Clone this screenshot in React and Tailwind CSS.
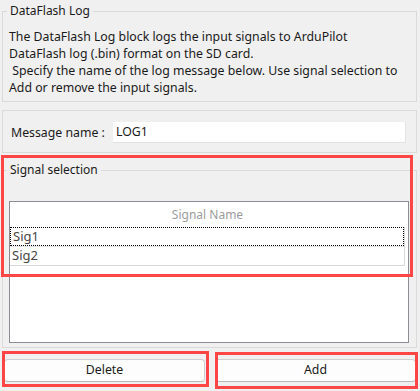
import React from 'react';

const FONT = { fontFamily: '"Noto Sans", "Open Sans", sans-serif' };

function GroupBox({ title, className = '', children }) {
  return (
    <fieldset className={`border border-[#dadada] mx-[2px] mr-[3px] ${className}`}>
      <legend className="ml-[4px] px-[3px] text-[12px] leading-[14px] text-[#1a1a1a]">{title}</legend>
      {children}
    </fieldset>
  );
}

export default function App() {
  const signals = ['Sig1', 'Sig2'];

  return (
    <div className="relative w-[420px] h-[391px] overflow-hidden bg-[#f0f0f0] text-[#1a1a1a]" style={FONT}>
      {/* Description */}
      <GroupBox title="DataFlash Log" className="mt-[4px]">
        <div className="pt-[10px] pb-[5px] pl-[6px] text-[12.3px] leading-[17px] whitespace-pre">
          <div>The DataFlash Log block logs the input signals to ArduPilot</div>
          <div>DataFlash log (.bin) format on the SD card.</div>
          <div> Specify the name of the log message below. Use signal selection to</div>
          <div>Add or remove the input signals.</div>
        </div>
      </GroupBox>

      {/* Message name */}
      <div className="mt-[8px] ml-[2px] mr-[3px] border border-[#dadada] flex items-center pt-[11px] pb-[9px] pl-[8px] pr-[10px]">
        <span className="w-[102px] shrink-0 text-[12.3px] leading-[21px]">Message name :</span>
        <div className="flex-1 h-[21px] bg-white border-r border-b border-[#e2e2e2] flex items-center pl-[3px] text-[12.3px]">
          LOG1
        </div>
      </div>

      {/* Signal selection */}
      <GroupBox title="Signal selection" className="mt-[10px]">
        <div className="pt-[24px] pb-[4px] pl-[6px] pr-[7px]">
          <div className="h-[142px] bg-white border border-[#8c8c92] flex flex-col">
            <div className="h-[25px] mr-[3px] flex items-center justify-center text-[12px] text-[#9c9c9c]">
              Signal Name
            </div>
            <div className="mr-[3px] border-r border-b border-[#d8d8d8]">
              {signals.map((s, i) => (
                <div
                  key={s}
                  className={`h-[19px] flex items-center pl-[2px] text-[13px] text-[#454545] ${
                    i === 0 ? 'border border-dotted border-black' : 'border-t border-[#e4e4e4]'
                  }`}
                >
                  {s}
                </div>
              ))}
            </div>
          </div>
        </div>
      </GroupBox>

      {/* Buttons */}
      <div className="mt-[11px] flex gap-[10px] pl-[4px] pr-[4px]">
        <button className="flex-1 h-[23px] bg-[#fdfdfd] border border-[#d0d0d0] border-b-[#b8b8b8] rounded-[4px] text-[12.3px] text-[#1a1a1a]">
          Delete
        </button>
        <button className="flex-1 h-[23px] bg-[#fdfdfd] border border-[#d0d0d0] border-b-[#b8b8b8] rounded-[4px] text-[12.3px] text-[#1a1a1a]">
          Add
        </button>
      </div>

      {/* Annotation highlights */}
      <div className="absolute left-[1px] top-[155px] w-[412px] h-[122px] border-[3px] border-[#ff4646] pointer-events-none" />
      <div className="absolute left-[2px] top-[351px] w-[207px] h-[36px] border-[3px] border-[#ff4646] pointer-events-none" />
      <div className="absolute left-[215px] top-[352px] w-[203px] h-[37px] border-[3px] border-[#ff4646] pointer-events-none" />
    </div>
  );
}
